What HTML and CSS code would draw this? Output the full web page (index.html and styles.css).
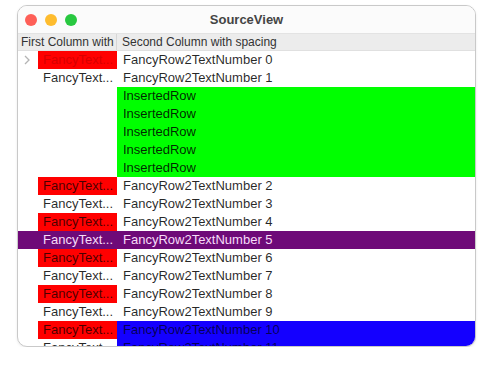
FILE: index.html
```html
<!DOCTYPE html>
<html>
<head>
  <title>SourceView</title>
  <link rel="stylesheet" href="styles.css">
</head>
<body>
  <div class="window">
    <div class="titlebar">
      <div class="lights">
        <span class="light close"></span>
        <span class="light minimize"></span>
        <span class="light zoom"></span>
      </div>
      <div class="title">SourceView</div>
    </div>

    <div class="header">
      <div class="col-first">First Column with</div>
      <div class="col-second">Second Column with spacing</div>
    </div>

    <div class="rows">
      <div class="row">
        <div class="col-first">
          <span class="disclosure">
            <svg width="8" height="10" viewBox="0 0 8 10"><polyline points="2,1 6,5 2,9" fill="none" stroke="#b4b4b4" stroke-width="1.3"/></svg>
          </span>
          <span class="cell red faded">FancyText...</span>
        </div>
        <div class="col-second">FancyRow2TextNumber 0</div>
      </div>
      <div class="row">
        <div class="col-first"><span class="disclosure"></span><span class="cell">FancyText...</span></div>
        <div class="col-second">FancyRow2TextNumber 1</div>
      </div>
      <div class="row">
        <div class="col-first"></div>
        <div class="col-second green">InsertedRow</div>
      </div>
      <div class="row">
        <div class="col-first"></div>
        <div class="col-second green">InsertedRow</div>
      </div>
      <div class="row">
        <div class="col-first"></div>
        <div class="col-second green">InsertedRow</div>
      </div>
      <div class="row">
        <div class="col-first"></div>
        <div class="col-second green">InsertedRow</div>
      </div>
      <div class="row">
        <div class="col-first"></div>
        <div class="col-second green">InsertedRow</div>
      </div>
      <div class="row">
        <div class="col-first"><span class="disclosure"></span><span class="cell red">FancyText...</span></div>
        <div class="col-second">FancyRow2TextNumber 2</div>
      </div>
      <div class="row">
        <div class="col-first"><span class="disclosure"></span><span class="cell">FancyText...</span></div>
        <div class="col-second">FancyRow2TextNumber 3</div>
      </div>
      <div class="row">
        <div class="col-first"><span class="disclosure"></span><span class="cell red">FancyText...</span></div>
        <div class="col-second">FancyRow2TextNumber 4</div>
      </div>
      <div class="row selected">
        <div class="col-first"><span class="disclosure"></span><span class="cell">FancyText...</span></div>
        <div class="col-second">FancyRow2TextNumber 5</div>
      </div>
      <div class="row">
        <div class="col-first"><span class="disclosure"></span><span class="cell red">FancyText...</span></div>
        <div class="col-second">FancyRow2TextNumber 6</div>
      </div>
      <div class="row">
        <div class="col-first"><span class="disclosure"></span><span class="cell">FancyText...</span></div>
        <div class="col-second">FancyRow2TextNumber 7</div>
      </div>
      <div class="row">
        <div class="col-first"><span class="disclosure"></span><span class="cell red">FancyText...</span></div>
        <div class="col-second">FancyRow2TextNumber 8</div>
      </div>
      <div class="row">
        <div class="col-first"><span class="disclosure"></span><span class="cell">FancyText...</span></div>
        <div class="col-second">FancyRow2TextNumber 9</div>
      </div>
      <div class="row">
        <div class="col-first"><span class="disclosure"></span><span class="cell red">FancyText...</span></div>
        <div class="col-second blue">FancyRow2TextNumber 10</div>
      </div>
      <div class="row">
        <div class="col-first"><span class="disclosure"></span><span class="cell">FancyText...</span></div>
        <div class="col-second blue">FancyRow2TextNumber 11</div>
      </div>
    </div>
  </div>
</body>
</html>
```

FILE: styles.css
```css
body {
  margin: 0;
  padding: 0;
  background-color: #fff;
  font-family: "Liberation Sans", Arial, sans-serif;
}

.window {
  width: 457px;
  height: 340px;
  margin: 5px 0 0 17px;
  border: 1px solid #c9c9c9;
  border-radius: 10px;
  overflow: hidden;
  background-color: #fff;
  box-shadow: 0 1px 3px rgba(0, 0, 0, 0.08);
}

.titlebar {
  height: 27px;
  display: flex;
  align-items: center;
  position: relative;
  border-bottom: 1px solid #e3e3e3;
  background-color: #fbfbfb;
}

.lights {
  display: flex;
  gap: 8px;
  padding-left: 7px;
  z-index: 1;
}

.light {
  width: 12px;
  height: 12px;
  border-radius: 50%;
}

.close { background-color: #fe5f57; }
.minimize { background-color: #febc2e; }
.zoom { background-color: #28c840; }

.title {
  position: absolute;
  left: 0;
  right: 0;
  text-align: center;
  font-size: 13px;
  font-weight: bold;
  color: #444;
}

.header {
  height: 16px;
  display: flex;
  background-color: #ececec;
  border-bottom: 1px solid #e0e0e0;
  font-size: 12px;
  color: #333;
}

.header .col-first {
  width: 99px;
  padding-left: 3px;
  box-sizing: border-box;
  border-right: 1px solid #d6d6d6;
  line-height: 16px;
  white-space: nowrap;
  overflow: hidden;
}

.header .col-second {
  flex: 1;
  padding-left: 5px;
  line-height: 16px;
}

.row {
  height: 18px;
  display: flex;
  font-size: 13px;
  line-height: 18px;
  color: rgba(0, 0, 0, 0.85);
}

.row .col-first {
  width: 99px;
  display: flex;
  flex-shrink: 0;
}

.row .col-second {
  flex: 1;
  padding-left: 6px;
  white-space: nowrap;
}

.disclosure {
  width: 20px;
  display: flex;
  align-items: center;
  justify-content: center;
  padding-right: 2px;
  box-sizing: border-box;
}

.cell {
  width: 79px;
  padding-left: 5px;
  box-sizing: border-box;
  white-space: nowrap;
  overflow: hidden;
}

.red {
  background-color: #ff0000;
  color: rgba(0, 0, 0, 0.72);
}

.red.faded {
  color: #d80000;
}

.green {
  background-color: #00ff00;
}

.blue {
  background-color: #1400ff;
  color: rgba(0, 0, 0, 0.68);
}

.selected {
  background-color: #6e0a78;
  color: #f6dcf8;
}
```
